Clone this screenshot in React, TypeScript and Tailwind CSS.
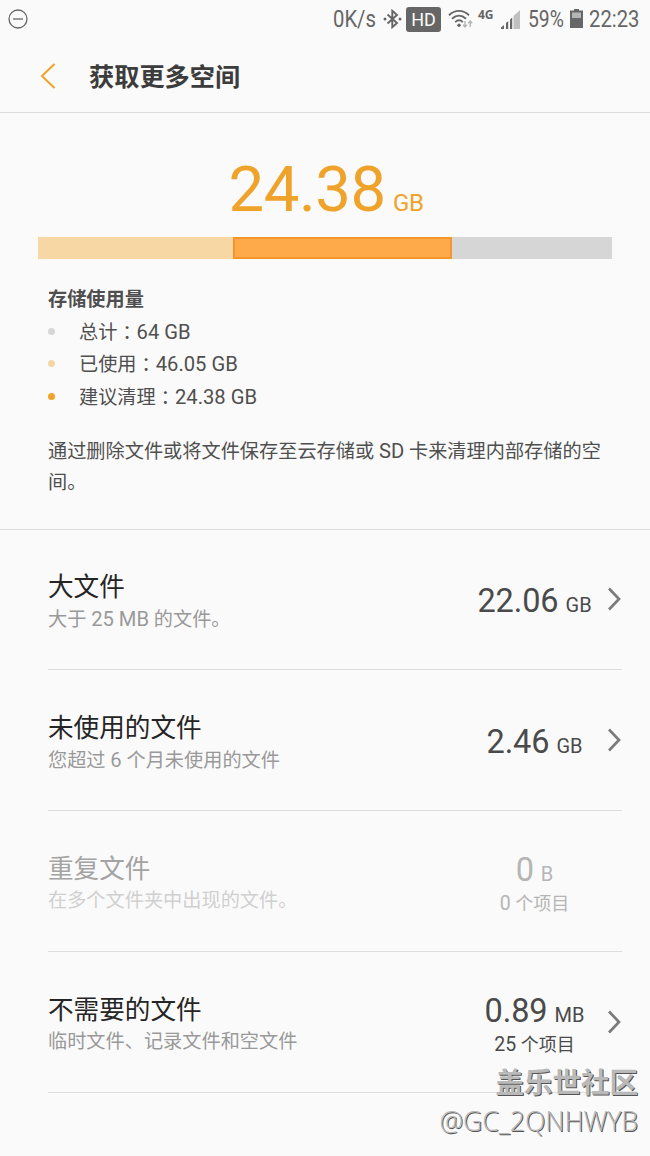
import React from "react";

type CleanupItem = {
  title: string;
  description: React.ReactNode;
  value: string;
  unit: string;
  count?: number;
  disabled?: boolean;
};

const items: CleanupItem[] = [
  {
    title: "大文件",
    description: <>大于 <Latin>25 MB</Latin> 的文件。</>,
    value: "22.06",
    unit: "GB",
  },
  {
    title: "未使用的文件",
    description: <>您超过 <Latin>6</Latin> 个月未使用的文件</>,
    value: "2.46",
    unit: "GB",
  },
  {
    title: "重复文件",
    description: "在多个文件夹中出现的文件。",
    value: "0",
    unit: "B",
    count: 0,
    disabled: true,
  },
  {
    title: "不需要的文件",
    description: "临时文件、记录文件和空文件",
    value: "0.89",
    unit: "MB",
    count: 25,
  },
];

const usage = [
  { label: "总计", value: "64 GB", dot: "bg-[#d6d6d6]" },
  { label: "已使用", value: "46.05 GB", dot: "bg-[#f5d6a2]" },
  { label: "建议清理", value: "24.38 GB", dot: "bg-[#efa32b]" },
];

function Latin({ children }: { children: React.ReactNode }) {
  return <span className="text-[20.2px]">{children}</span>;
}

function StatusBar() {
  return (
    <div className="flex h-[38px] items-center pl-2 pr-[10px] text-[#666]">
      <svg width="20" height="20" viewBox="0 0 20 20" fill="none" stroke="currentColor" strokeWidth="1.3">
        <circle cx="10" cy="10" r="9" />
        <path d="M5 10h10" />
      </svg>

      <div className="ml-auto flex items-center text-[23px] leading-[40px]">
        <span className="mr-[7px] w-[43px] pt-px">
          <span className="inline-block origin-left scale-x-[0.88] whitespace-nowrap">0K/s</span>
        </span>

        {/* Bluetooth */}
        <svg className="mr-1" width="19" height="20" viewBox="0 0 19 20" fill="none" stroke="currentColor" strokeWidth="1.9">
          <path d="M4.500 5.500 14 14l-4.700 4.200V1.800L14 6l-9.500 8.500" />
          <circle cx="2" cy="10" r="1.5" fill="currentColor" stroke="none" />
          <circle cx="17" cy="10" r="1.5" fill="currentColor" stroke="none" />
        </svg>

        <span className="mr-[7px] h-[25px] w-[35px] rounded-[3px] bg-[#666] text-center text-[18px] leading-[25px] text-[#fafafa]">HD</span>

        {/* Wi-Fi with traffic arrows */}
        <svg className="mr-[5px]" width="25" height="20" viewBox="0 0 25 20" fill="none" stroke="currentColor" strokeWidth="1.9">
          <path d="M1 6.2C7 .4 15 .4 21 6.2M4 9.8c4.3-4.1 9.7-4.1 14 0M7.2 13.1c2.4-2.2 5.2-2.2 7.6 0" />
          <circle cx="11" cy="16.2" r="1.7" fill="currentColor" stroke="none" />
          <path d="M17 12v6m-2-2.2 2 2.2 2-2.2M22.2 18v-6m-2 2.2 2-2.2 2 2.2" stroke="#b5b5b5" strokeWidth="1.4" />
        </svg>

        <span className="mr-[7px] h-[38px] w-[16px] font-['Open_Sans'] text-[12px] font-bold leading-[29px]">4G</span>

        {/* Signal strength */}
        <svg className="mr-2" width="19" height="19" viewBox="0 0 19 19" fill="currentColor">
          <path d="M0 19v-1.5L3 15v4zM5 19v-6l2.2-2v8zM9 19V9.5L11.2 7.5V19z" />
          <path d="M12.5 19V6L19 0v19z" fill="#c0c0c0" />
        </svg>

        <span className="mr-[5px] w-[37px] pt-px">
          <span className="inline-block origin-left scale-x-[0.84]">59%</span>
        </span>

        {/* Battery */}
        <svg className="mb-[2px] mr-[6px]" width="13" height="19" viewBox="0 0 13 19" fill="currentColor">
          <path d="M4 0h5v1.500h4V19H0V1.500h4z" />
          <path d="M2 3.500h9V9H2z" fill="#b5b5b5" />
        </svg>

        <span className="w-[51px] pt-px">
          <span className="inline-block origin-left scale-x-[0.88]">22:23</span>
        </span>
      </div>
    </div>
  );
}

function ItemRow({ item }: { item: CleanupItem }) {
  return (
    <li className={`ml-12 mr-7 flex h-[141px] border-b border-[#dedede] ${item.disabled ? "text-[#b5b5b5]" : "text-[#4a4a4a]"}`}>
      <div className="grow pt-[41px]">
        <h2 className={`text-[25.6px] leading-[34px] ${item.disabled ? "text-[#a3a3a3]" : "text-[#252525]"}`}>{item.title}</h2>
        <p className={`text-[19.2px] leading-[30px] ${item.disabled ? "text-[#d0d0d0]" : "text-[#999]"}`}>{item.description}</p>
      </div>

      <div className="flex w-[120px] flex-col items-center justify-center whitespace-nowrap pl-[3px] pt-[8px]">
        <div className="flex items-baseline gap-[7px] leading-[38px]">
          <span className="text-[32.5px] tracking-[-0.1px]">{item.value}</span>
          <span className="text-[20px]">{item.unit}</span>
        </div>
        {item.count !== undefined && (
          <div className="-mt-1 text-[18px] leading-[30px]">
            <span className="text-[19.5px]">{item.count}</span> 个项目
          </div>
        )}
      </div>

      <div className="flex w-[29px] items-center justify-end">
        {!item.disabled && (
          <svg width="14" height="24" viewBox="0 0 14 24" fill="none" stroke="#7b7b7b" strokeWidth="2.7">
            <path d="M1 1.5 11 12 1 22.5" />
          </svg>
        )}
      </div>
    </li>
  );
}

export default function App() {
  return (
    <div lang="zh-CN" className="relative h-[1156px] w-[650px] overflow-hidden bg-[#fafafa] font-[Roboto,'Noto_Sans_CJK_SC',sans-serif] text-[#4f4f4f]">
      <StatusBar />

      <header className="flex h-[75px] items-center border-b border-[#dcdcdc] pl-10 pt-[2px]">
        <svg width="16" height="26" viewBox="0 0 16 26" fill="none" stroke="#efa32b" strokeWidth="2">
          <path d="M14.5 1 2 13l12.5 12" />
        </svg>
        <h1 className="ml-[33px] pt-[3px] text-[25.2px] font-bold text-[#3c3c3c]">获取更多空间</h1>
      </header>

      <section className="h-[417px] border-b border-[#dcdcdc] pt-[39px]">
        <div className="flex h-[76px] items-baseline justify-center gap-[7px] pl-[2px] leading-[76px] text-[#efa32b]">
          <span className="text-[63.5px] tracking-[-0.4px]">24.38</span>
          <span className="text-[24px] tracking-[-0.3px]">GB</span>
        </div>

        {/* Storage bar */}
        <div className="ml-[38px] mt-[9px] flex h-[22px] w-[574px] bg-[#d6d6d6]">
          <div className="w-[195px] bg-[#f7d7a3]" />
          <div className="w-[219px] border-2 border-[#f4962b] bg-[#fea94a]" />
        </div>

        <div className="pl-12 pt-[25px] text-[19.2px]">
          <h2 className="font-bold leading-[32px]">存储使用量</h2>
          <ul>
            {usage.map((row) => (
              <li key={row.label} className="flex h-[32.5px] items-center">
                <span className={`mb-[2px] mr-6 size-[7px] rounded-full ${row.dot}`} />
                <span className="leading-[32px]">
                  {row.label}
                  <span lang="zh-TW" className="relative top-px font-['Noto_Sans_CJK_TC'] leading-none">：</span>
                  <Latin>{row.value}</Latin>
                </span>
              </li>
            ))}
          </ul>
          <p className="mt-[22px] w-[562px] leading-[31px]">
            通过删除文件或将文件保存至云存储或 <Latin>SD</Latin> 卡来清理内部存储的空间。
          </p>
        </div>
      </section>

      <ul className="-mt-px">
        {items.map((item) => (
          <ItemRow key={item.title} item={item} />
        ))}
      </ul>

      {/* Community watermark */}
      <div className="absolute bottom-[17px] right-3 text-right text-[#b9b9b9]">
        <div className="text-[28.5px] font-bold leading-[38px] [text-shadow:1px_1px_0_#555]">盖乐世社区</div>
        <div className="font-['Open_Sans'] text-[26.6px] font-light leading-[36px] [text-shadow:1px_1px_0_#555]">@GC_2QNHWYB</div>
      </div>
    </div>
  );
}
